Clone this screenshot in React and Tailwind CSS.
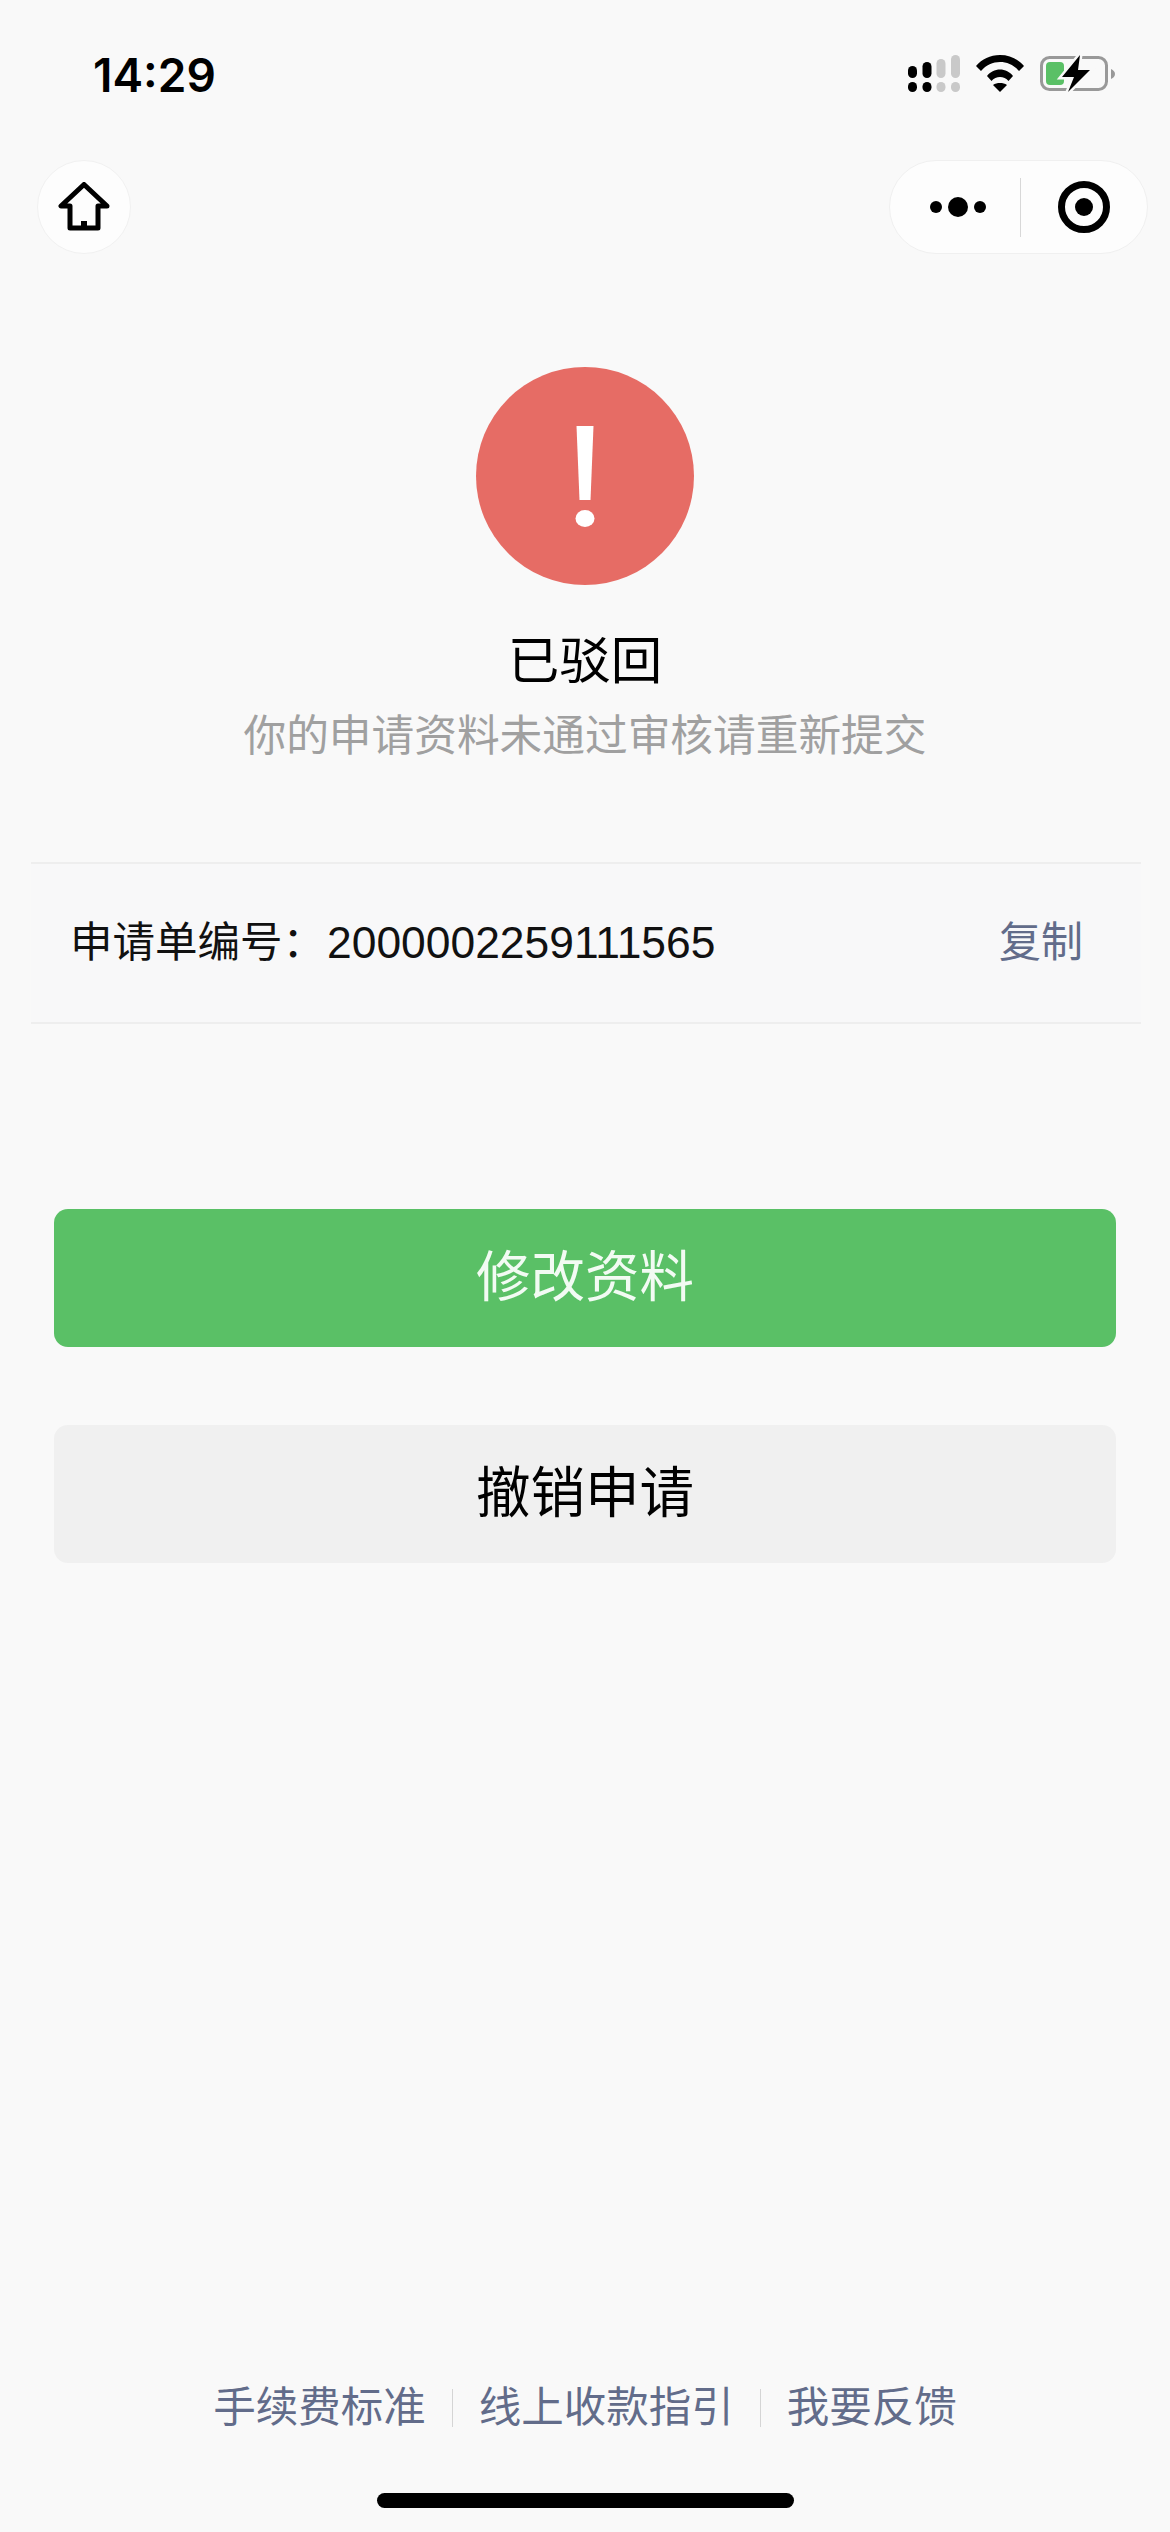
const SANS = 'font-["Liberation_Sans","Noto_Sans_CJK_SC",sans-serif]';

function SignalIcon() {
  const bars = [
    { x: 0, y: 11, fill: '#000' },
    { x: 14.5, y: 7, fill: '#000' },
    { x: 28.5, y: 4, fill: '#c9c9c9' },
    { x: 43, y: 0, fill: '#c9c9c9' },
  ];
  return (
    <svg width="52" height="37" viewBox="0 0 52 37" aria-hidden="true">
      {bars.map((b) => (
        <g key={b.x} fill={b.fill}>
          <rect x={b.x} y={b.y} width="9" height={23 - b.y} rx="4.500" />
          <rect x={b.x} y="27" width="9" height="10" rx="4.500" />
        </g>
      ))}
    </svg>
  );
}

function WifiIcon() {
  return (
    <svg width="48" height="37" viewBox="0 0 48 37" fill="#000" aria-hidden="true">
      <path d="M0 11C6 4 14 0 24 0S42 4 48 11L43 16C38 10 31 7 24 7S10 10 5 16z" />
      <path d="M11 21C14 17 19 14.500 24 14.500S34 17 37 21L32.500 26C30.500 23.500 27 22 24 22S17.500 23.500 15.500 26z" />
      <path d="M17 30C19 28.500 21.500 28 24 28S29 28.500 31 30L24 37z" />
    </svg>
  );
}

function BatteryIcon() {
  const bolt = 'M40 0 22 22h12l-6 15 22-22H38z';
  return (
    <svg width="75" height="37" viewBox="0 0 75 37" aria-hidden="true">
      <rect x="1.500" y="2.500" width="65" height="32" rx="8" fill="none" stroke="#999" strokeWidth="3" />
      <path d="M71 14c2.500 1 4 3 4 5s-1.500 4-4 5z" fill="#999" />
      <rect x="6" y="7" width="18" height="23" rx="4" fill="#5ac066" />
      <path d={bolt} fill="#f9f9f9" stroke="#f9f9f9" strokeWidth="5" />
      <path d={bolt} fill="#000" />
    </svg>
  );
}

function HomeIcon() {
  return (
    <svg width="52" height="50" viewBox="0 0 52 50" fill="none" aria-hidden="true">
      <path d="M26 2.500 3 24h9v22h28V24h9z" stroke="#000" strokeWidth="5" strokeLinejoin="round" />
      <rect x="23" y="39" width="6" height="8" fill="#000" />
    </svg>
  );
}

function FooterLink({ children }) {
  return <span className="text-[42.500px] leading-none text-[#626c8a]">{children}</span>;
}

export default function App() {
  return (
    <div className={`${SANS} relative flex h-[2532px] w-[1170px] flex-col overflow-hidden bg-[#f9f9f9] text-black`}>
      {/* status bar */}
      <div className="flex h-[160px] items-start justify-between pl-[93px] pr-[55px] pt-[47px]">
        <span className='font-["Inter",sans-serif] text-[46px] font-semibold leading-[56px]'>14:29</span>
        <div className="flex items-center gap-[16px] pt-[8px]">
          <SignalIcon />
          <WifiIcon />
          <BatteryIcon />
        </div>
      </div>

      {/* mini program nav */}
      <div className="flex items-center justify-between pl-[37px] pr-[22px]">
        <div className="flex h-[94px] w-[94px] items-center justify-center rounded-full border border-[#f1f1f1] bg-[#fdfdfd]">
          <HomeIcon />
        </div>
        <div className="flex h-[94px] w-[259px] items-center rounded-full border border-[#f0f0f0] bg-[#fdfdfd]">
          <div className="flex w-[130px] items-center justify-center gap-[6px] pl-[6px]">
            <span className="h-[12px] w-[12px] rounded-full bg-black" />
            <span className="h-[20px] w-[20px] rounded-full bg-black" />
            <span className="h-[12px] w-[12px] rounded-full bg-black" />
          </div>
          <div className="h-[59px] w-px bg-[#d8d8d8]" />
          <div className="flex flex-1 items-center justify-center">
            <div className="flex h-[52px] w-[52px] items-center justify-center rounded-full border-[7px] border-black">
              <span className="h-[18px] w-[18px] rounded-full bg-black" />
            </div>
          </div>
        </div>
      </div>

      {/* result */}
      <div className="mt-[113px] flex flex-col items-center">
        <div className="flex h-[218px] w-[218px] items-center justify-center rounded-full bg-[#e66c65]">
          <svg width="20" height="101" viewBox="0 0 20 101" aria-hidden="true">
            <path d="M1.500 0h17l-3 74h-11z" fill="#fff" />
            <ellipse cx="10" cy="92.500" rx="9.500" ry="8.500" fill="#fff" />
          </svg>
        </div>
        <h1 className="mt-[46px] text-[51.500px] font-normal leading-[60px]">已驳回</h1>
        <p className="mt-[20px] text-[42.700px] leading-[50px] text-[#a0a0a0]">你的申请资料未通过审核请重新提交</p>
      </div>

      {/* application number */}
      <div className="ml-[31px] mr-[29px] mt-[101px] flex h-[162px] items-center justify-between border-y-2 border-[#eeeeee] bg-[#f8f8f9] pl-[39px] pr-[58px]">
        <div className="flex items-center leading-none text-[#111]">
          <span className="w-[257px] text-[42.500px]">申请单编号：</span>
          <span className="text-[44.400px]">2000002259111565</span>
        </div>
        <button className="text-[42px] leading-none text-[#626c8a]">复制</button>
      </div>

      {/* actions */}
      <div className="mt-[185px] flex flex-col gap-[78px] px-[54px]">
        <button className="h-[138px] rounded-[14px] bg-[#5ac066] text-[54.500px] text-[#f2fbf3]">修改资料</button>
        <button className="h-[138px] rounded-[14px] bg-[#f0f0f0] text-[54.500px] text-black">撤销申请</button>
      </div>

      {/* footer links */}
      <div className="mt-auto flex items-center justify-center pb-[103px]">
        <FooterLink>手续费标准</FooterLink>
        <span className="mx-[26px] h-[38px] w-px bg-[#d5d5d5]" />
        <FooterLink>线上收款指引</FooterLink>
        <span className="mx-[26px] h-[38px] w-px bg-[#d5d5d5]" />
        <FooterLink>我要反馈</FooterLink>
      </div>

      {/* home indicator */}
      <div className="absolute bottom-[24px] left-[377px] h-[15px] w-[417px] rounded-full bg-black" />
    </div>
  );
}
